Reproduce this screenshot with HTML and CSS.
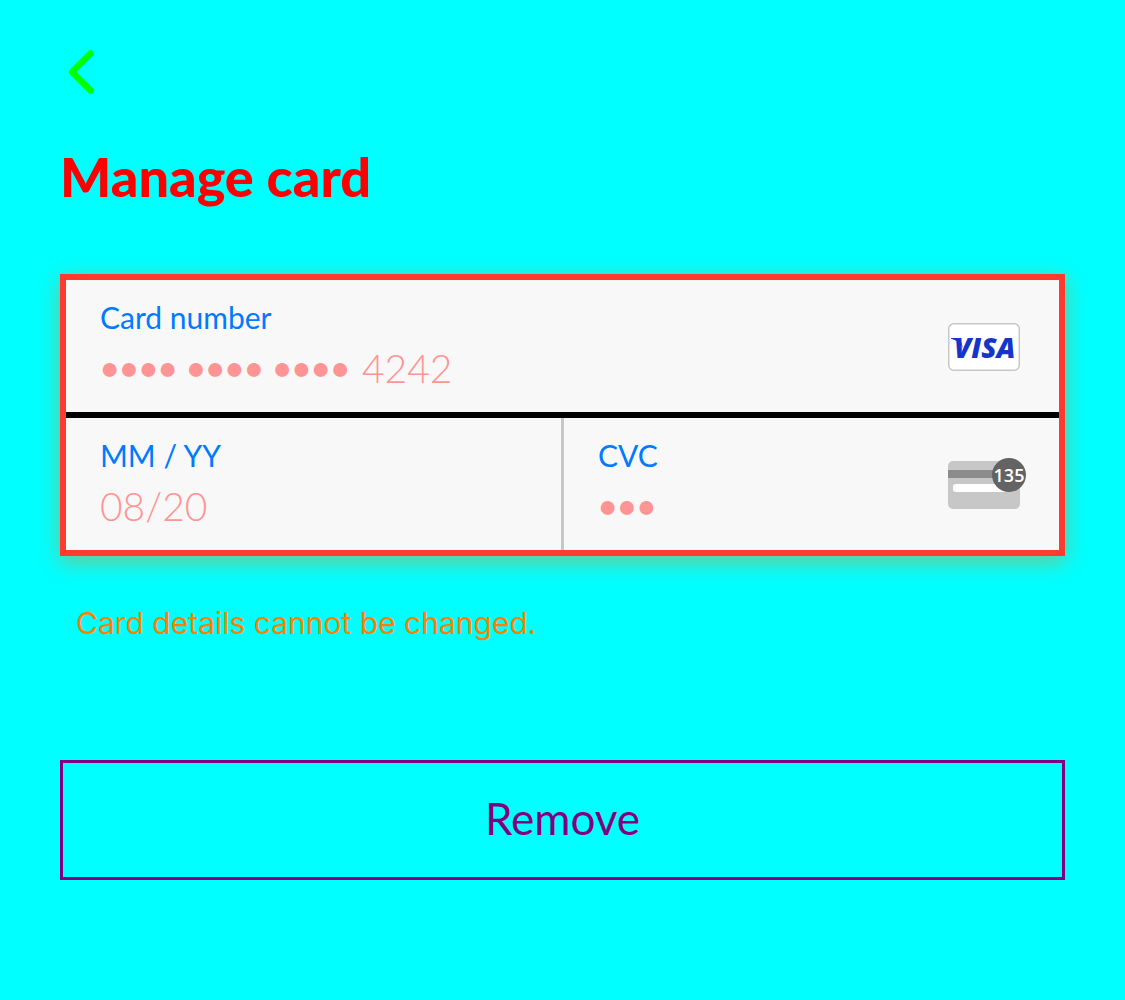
FILE: index.html
```html
<!DOCTYPE html>
<html lang="en">
<head>
<meta charset="utf-8">
<meta name="viewport" content="width=device-width, initial-scale=1">
<title>Manage card</title>
<link rel="stylesheet" href="styles.css">
</head>
<body>
<main class="page">
  <button class="back" type="button" aria-label="Back">
    <svg width="26" height="44" viewBox="0 0 26 44" fill="none" stroke="currentColor" stroke-width="6.5" stroke-linecap="round" stroke-linejoin="round" aria-hidden="true"><path d="M22.500 3.500 4 22l18.500 18.500"/></svg>
  </button>
  <h1 class="title">Manage card</h1>
  <form class="content">
    <div class="card">
      <div class="cell cell-number">
        <div class="field">
          <label class="label" for="number">Card number</label>
          <div class="number">
            <input class="value masked" id="number" type="text" value="●●●● ●●●● ●●●●" readonly>
            <input class="value" type="text" value="4242" aria-label="Last four digits" readonly>
          </div>
        </div>
        <svg class="brand" width="78" height="54" viewBox="0 -1 78 54" role="img" aria-label="Visa">
          <rect x=".75" y="3.75" width="70.5" height="46.5" rx="5" fill="#fff" stroke="#c7c7c7" stroke-width="1.5"/>
          <path d="M3 18h9l3 10Q11 20.500 3 18.800z" fill="#1434cb"/>
          <text class="visa" x="6" y="38">VISA</text>
        </svg>
      </div>
      <div class="cell">
        <div class="field">
          <label class="label" for="expiry">MM / YY</label>
          <input class="value" id="expiry" type="text" value="08/20" readonly>
        </div>
      </div>
      <div class="cell">
        <div class="field">
          <label class="label" for="cvc">CVC</label>
          <input class="value masked" id="cvc" type="text" value="●●●" readonly>
        </div>
        <svg class="brand" width="78" height="54" viewBox="0 -1 78 54" aria-hidden="true">
          <rect y="3" width="72" height="48" rx="5" fill="#c7c7c7"/>
          <path d="M0 12h72v8H0z" fill="#8c8c8c"/>
          <rect x="5" y="26" width="62" height="8" rx="3" fill="#fff"/>
          <circle cx="61" cy="17" r="17" fill="#636363"/>
          <text class="digits" x="61" y="24">135</text>
        </svg>
      </div>
    </div>
    <p class="note">Card details cannot be changed.</p>
    <button class="remove" type="button">Remove</button>
  </form>
</main>
</body>
</html>
```
FILE: styles.css
```css
* {
  box-sizing: border-box;
}

body {
  margin: 0;
  min-height: 100vh;
  background: #00ffff;
  font-family: Lato, "Liberation Sans", sans-serif;
}

.page {
  padding: 48px 60px;
}

.back {
  display: flex;
  padding: 2px 8px;
  border: 0;
  background: none;
  color: #00ff00;
}

.title {
  margin: 48px 0 64px;
  color: #ff0000;
  font-size: 54px;
  font-weight: 900;
  line-height: 66px;
}

.card {
  display: grid;
  grid-template-columns: 1fr 1fr;
  column-gap: 3px;
  border: 6px solid #ff3b30;
  background: #c7c7c9;
  box-shadow: 0 6px 20px rgba(255, 128, 0, 0.45);
}

.cell {
  display: flex;
  align-items: center;
  min-width: 0;
  height: 132px;
  padding: 0 33px 0 34px;
  background: #f8f8f8;
}

.cell-number {
  grid-column: 1 / -1;
  height: 138px;
  border-bottom: 6px solid #000;
}

.field {
  display: flex;
  flex: 1;
  flex-direction: column;
  min-width: 0;
}

.label {
  padding-top: 2px;
  color: #007aff;
  font-size: 30px;
  font-weight: 400;
  line-height: 40px;
}

.number {
  display: flex;
  gap: 8px;
}

.value {
  width: 100%;
  height: 60px;
  padding: 2px 0 0;
  border: 0;
  outline: 0;
  background: none;
  color: #ff9494;
  font: 300 39px/58px Lato, "Liberation Sans", sans-serif;
}

.masked {
  flex: none;
  font: 400 32px/58px "Liberation Sans", sans-serif;
}

.number .masked {
  width: 254px;
}

.number .value:last-child {
  flex: 1;
  min-width: 0;
}

.brand {
  flex: none;
}

.visa {
  fill: #1434cb;
  font: italic 800 28px "Open Sans", sans-serif;
}

.digits {
  fill: #fff;
  font: 600 18px "Open Sans", sans-serif;
  text-anchor: middle;
}

.note {
  margin: 48px 16px 118px;
  color: #ff8000;
  font: 400 30px/38px Inter, sans-serif;
}

.remove {
  display: block;
  width: 100%;
  height: 120px;
  padding: 0 0 4px;
  border: 3px solid #800080;
  background: none;
  color: #800080;
  font: 400 44px/54px Lato, sans-serif;
}
```
